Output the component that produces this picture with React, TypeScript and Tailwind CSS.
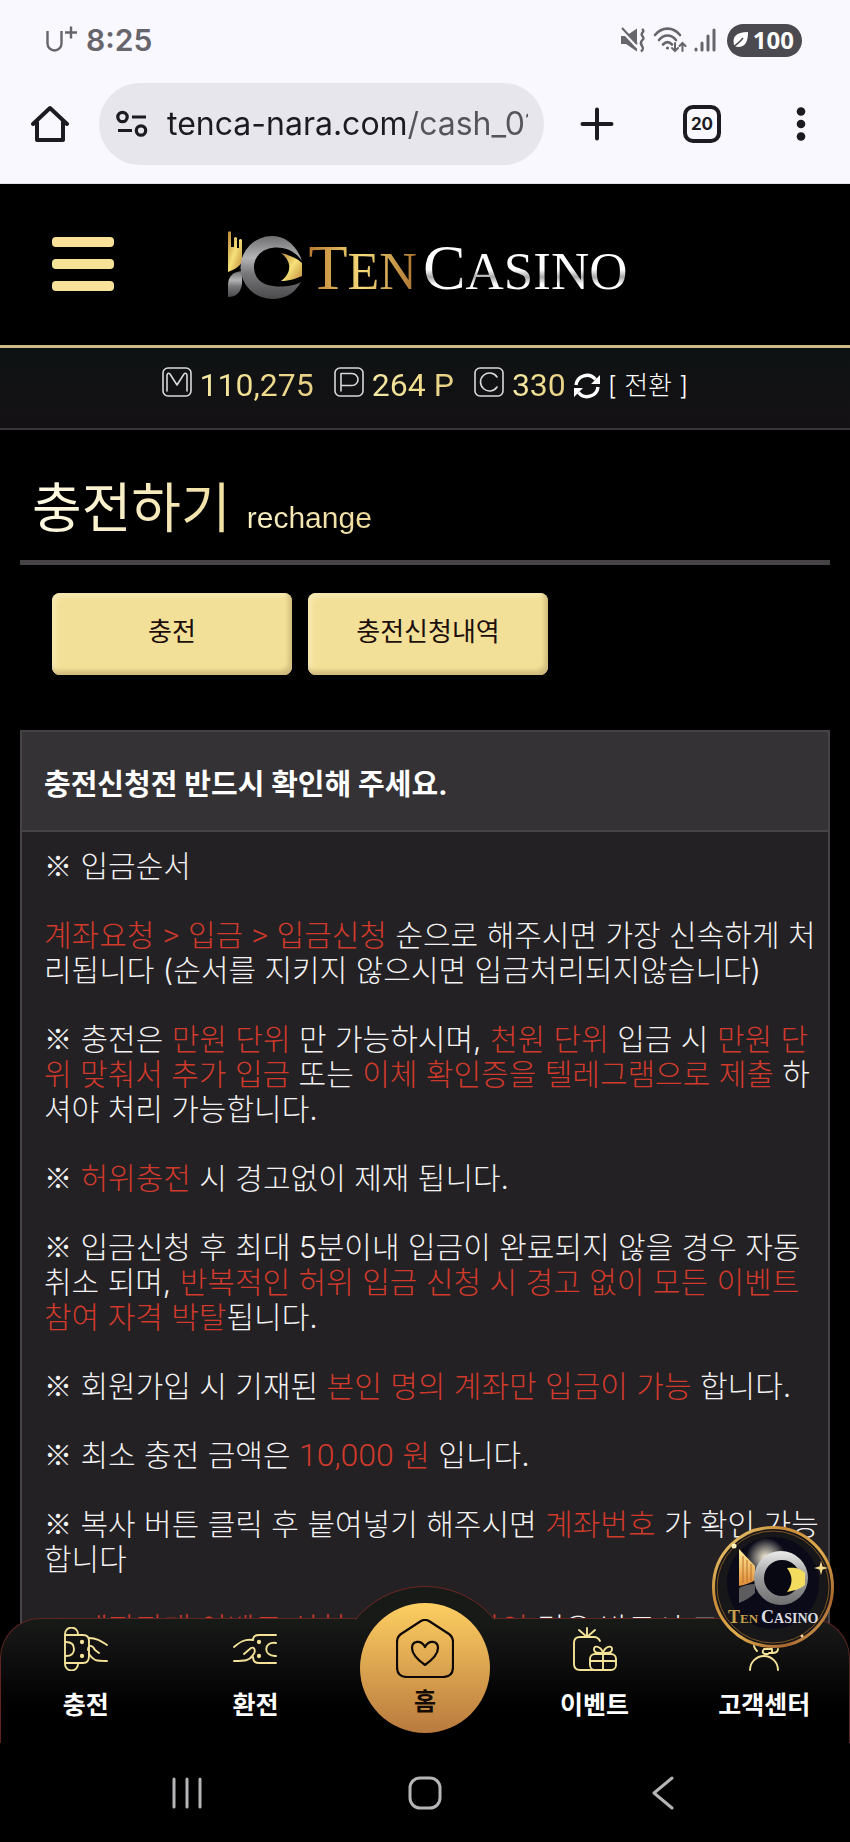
import React from "react";

const gold = "#f3e298";

function StatusBar() {
  return (
    <div className="flex h-20 items-center justify-between pr-12 pl-11 text-[#66656b]">
      <div className="flex items-center gap-2">
        <svg width="34" height="30" viewBox="0 0 34 30" fill="none" stroke="currentColor" strokeWidth="2.4" aria-hidden="true">
          <path d="M3.500 6V18.500a7 7 0 0 0 14 0V6" />
          <path d="M21 7.500H33M27 1.500V13.500" />
        </svg>
        <span className="font-[Inter,sans-serif] text-[30px] leading-8 font-semibold">8:25</span>
      </div>
      <div className="flex items-center gap-[7px]">
        <svg width="26" height="26" viewBox="0 0 26 26" fill="none" stroke="currentColor" aria-hidden="true">
          <path d="M1 9h5L17 1.500v23L6 17H1Z" fill="currentColor" stroke="none" />
          <path d="M1 2 18 20" stroke="#f9f8fe" strokeWidth="4" />
          <path d="M2 1 17 17" strokeWidth="2" />
          <path d="M22 2c4 2.500-2 4 0 6.500s2 3 0 5-1 4 0 5.500 2 3-1 5.500" strokeWidth="2.400" />
        </svg>
        <svg width="34" height="28" viewBox="0 0 34 28" fill="none" stroke="currentColor" strokeWidth="2.600" strokeLinecap="round" aria-hidden="true">
          <path d="M2 9c7-8.500 18-8.500 25 0M6 14c5-6 12-6 17 0M10 18.500c3-3.200 6-3.200 9 0" />
          <circle cx="14.500" cy="22" r="1.600" fill="currentColor" stroke="none" />
          <path d="M22 17v8m-3-3 3 3 3-3M29.500 25v-8m-3 3 3-3 3 3" strokeWidth="2" />
        </svg>
        <svg width="22" height="26" viewBox="0 0 22 26" fill="none" stroke="currentColor" strokeWidth="3" strokeLinecap="round" aria-hidden="true">
          <path d="M2 22v1M8 16v7M14 9v14M20 3v20" />
        </svg>
        <span className="ml-1 flex h-[33px] items-center gap-1 rounded-full bg-[#4b4a50] pr-2 pl-1 text-white">
          <svg width="18" height="18" viewBox="0 0 18 18" aria-hidden="true">
            <path d="M3 14C1 6 5 1 17 1c0 10-3 15-10 15-2 0-3-1-4-2Z" fill="#fff" />
            <path d="M1 17C5 14 9 11 12 7" stroke="#4b4a50" strokeWidth="1.500" fill="none" />
          </svg>
          <span className="font-['Open_Sans',sans-serif] text-[24px] leading-8 font-bold">100</span>
        </span>
      </div>
    </div>
  );
}

function BrowserBar() {
  return (
    <div className="flex h-[104px] items-start border-b border-[#e2e1e8] pt-[3px] pr-10 pl-[31px] text-[#1c1b22]">
      <div className="flex h-[82px] w-full items-center">
        <button aria-label="Home" className="shrink-0">
          <svg width="38" height="38" viewBox="0 0 38 38" fill="none" stroke="currentColor" strokeWidth="4" strokeLinejoin="round" strokeLinecap="round">
            <path d="M2 19 19 3l17 16M6 17v18h26V17" />
          </svg>
        </button>
        <label className="ml-[30px] flex h-full min-w-0 flex-1 items-center rounded-full bg-[#e7e6ed] pr-4 pl-4">
          <svg width="34" height="28" viewBox="0 0 34 28" className="shrink-0" fill="none" stroke="currentColor" strokeWidth="3.200" aria-hidden="true">
            <circle cx="7.500" cy="7" r="4.700" />
            <path d="M17 7h14M3 20.500h14" />
            <circle cx="26" cy="20.500" r="4.700" />
          </svg>
          <input
            aria-label="Address"
            readOnly
            defaultValue="tenca-nara.com/cash_01"
            className="ml-[18px] min-w-0 flex-1 bg-linear-to-r from-[#1c1b22] from-[238px] to-[#55545b] to-[238px] bg-clip-text font-[Inter,sans-serif] text-[32px] leading-10 text-transparent outline-none"
          />
        </label>
        <button aria-label="New tab" className="ml-9 shrink-0">
          <svg width="34" height="34" viewBox="0 0 34 34" fill="none" stroke="currentColor" strokeWidth="4" strokeLinecap="round">
            <path d="M17 2.500v29M2.500 17h29" />
          </svg>
        </button>
        <button aria-label="Tabs" className="ml-[69px] flex size-[38px] shrink-0 items-center justify-center rounded-[10px] border-4 border-[#1c1b22] font-[Inter,sans-serif] text-[17px] leading-5 font-bold">
          20
        </button>
        <button aria-label="More" className="ml-[71px] shrink-0">
          <svg width="18" height="36" viewBox="0 0 18 36" fill="currentColor">
            <circle cx="9" cy="5.500" r="4.300" />
            <circle cx="9" cy="18" r="4.300" />
            <circle cx="9" cy="30.500" r="4.300" />
          </svg>
        </button>
      </div>
    </div>
  );
}

function Emblem() {
  return (
    <svg width="76" height="70" viewBox="0 0 76 70" aria-hidden="true">
      <defs>
        <linearGradient id="silver" x1="0" y1="0" x2="0" y2="1">
          <stop offset="0" stopColor="#6f6f72" />
          <stop offset=".35" stopColor="#b4b4b6" />
          <stop offset=".6" stopColor="#77777a" />
          <stop offset="1" stopColor="#4a4a4d" />
        </linearGradient>
        <linearGradient id="leaf" x1="0" y1="0" x2="1" y2="1">
          <stop offset="0" stopColor="#b98435" />
          <stop offset=".5" stopColor="#f6e27a" />
          <stop offset="1" stopColor="#c08a3a" />
        </linearGradient>
      </defs>
      <path d="M0 1q1.500-1.500 3 0v15h3V7q1.500-2 3 0v10h2V9q1.500-2 3 0v22q-3 6-14 10Z" fill="url(#leaf)" />
      <path d="M0 66V53q1-12 14-13v13q-2 13-14 13Z" fill="url(#silver)" />
      <path d="M74 30C68 13 57 5 44 5a31 31 0 0 0 0 63c13 0 22-5 29-17-9 5-21 5-28 4-12-1-19-9-19-19s8-18 18-19c10-2 23 2 30 13Z" fill="url(#silver)" />
      <path d="M53 22c8 2 16 5 21 10v13c-6 3-15 5-21 5 10-7 12-19 0-28Z" fill="url(#leaf)" />
    </svg>
  );
}

function SiteHeader() {
  return (
    <header className="grid h-[161px] grid-cols-[1fr_auto_1fr] items-center px-13 pb-[2px]">
      <button aria-label="메뉴" className="flex w-[62px] flex-col gap-3">
        <span className="h-[10px] w-full rounded-sm bg-[#fae19a]" />
        <span className="h-[10px] w-full rounded-sm bg-[#f5e297]" />
        <span className="h-[10px] w-full rounded-sm bg-[#f8e29b]" />
      </button>
      <a href="#home" className="mt-1 flex items-center gap-1 pl-[6px] font-['Liberation_Serif',serif] text-[64px] leading-[72px]">
        <Emblem />
        <span className="flex items-baseline gap-[6px] pt-2">
          <span className="bg-linear-to-r from-[#b9792f] via-[#f7dc7a] to-[#a8702c] bg-clip-text text-transparent">
            T<span className="text-[52px]">EN</span>
          </span>
          <span className="bg-linear-to-b from-white from-50% via-[#a9a9ab] via-60% to-white to-70% bg-clip-text text-transparent">
            C<span className="text-[53px]">ASINO</span>
          </span>
        </span>
      </a>
    </header>
  );
}

function Badge({ d }: { d: string }) {
  return (
    <svg width="30" height="30" viewBox="0 0 30 30" fill="none" stroke="#d9d9dc" strokeWidth="1.600" strokeLinecap="round" strokeLinejoin="round" aria-hidden="true">
      <rect x="1" y="1" width="28" height="28" rx="5" />
      <path d={d} />
    </svg>
  );
}

function Balance({ icon, value }: { icon: string; value: string }) {
  return (
    <span className="flex items-center gap-2">
      <Badge d={icon} />
      <span className="mt-[6px] bg-linear-to-r from-[#f6e9a6] via-[#f1df8f] to-[#e6cf86] bg-clip-text font-[Roboto,sans-serif] text-[32px] leading-10 text-transparent">
        {value}
      </span>
    </span>
  );
}

function BalanceBar() {
  return (
    <div className="flex h-[85px] items-center justify-center gap-5 border-t-3 border-b-2 border-t-[#cdbb87] border-b-[#39373a] bg-linear-to-b from-[#0e1213] to-[#141114] pb-3">
      <Balance icon="M5 24V8q1-3 3-1l7 11 7-11q2-2 3 1V24" value="110,275" />
      <Balance icon="M7 24V6.500H18a6 6 0 0 1 0 12H7" value="264 P" />
      <div className="flex items-center gap-2">
        <Balance icon="M23 10a9 9 0 1 0 0 10" value="330" />
        <button className="mt-2 flex items-center gap-2 text-[26px] leading-8 font-light text-white">
          <svg width="26" height="26" viewBox="0 0 26 26" fill="none" stroke="#fff" strokeWidth="3.400" aria-hidden="true">
            <path d="M2 12A11 11 0 0 1 21.500 6.500M24 14A11 11 0 0 1 4.500 19.500" />
            <path d="M26 2v9h-9ZM0 24v-9h9Z" fill="#fff" stroke="none" />
          </svg>
          <span>[ 전환 ]</span>
        </button>
      </div>
    </div>
  );
}

function Red({ children }: { children: React.ReactNode }) {
  return <span className="text-[#d03a2c]">{children}</span>;
}

function Mark() {
  return <span className="font-['Noto_Sans_CJK_KR',sans-serif] text-[28px] leading-none">※</span>;
}

function Arrow() {
  return <span className="font-[Roboto,sans-serif] text-[32px] leading-none">&gt;</span>;
}

function Notice() {
  return (
    <section className="mx-5 border-2 border-[#454346] bg-[#232123] text-[#f3f2f3]">
      <h2 className="border-b-2 border-[#454346] bg-[#353235] px-[22px] pt-8 pb-6 text-[29px] leading-[42px] font-bold text-white">
        충전신청전 반드시 확인해 주세요.
      </h2>
      <div className="flex flex-col gap-[34px] pt-[17px] pr-1 pl-[22px] text-[30px] leading-[35px] font-light">
        <p>
          <Mark /> 입금순서
        </p>
        <p>
          <Red>
            계좌요청 <Arrow /> 입금 <Arrow /> 입금신청
          </Red>{" "}
          순으로 해주시면 가장 신속하게 처리됩니다 (순서를 지키지 않으시면 입금처리되지않습니다)
        </p>
        <p>
          <Mark /> 충전은 <Red>만원 단위</Red> 만 가능하시며, <Red>천원 단위</Red> 입금 시 <Red>만원 단위 맞춰서 추가 입금</Red> 또는{" "}
          <Red>이체 확인증을 텔레그램으로 제출</Red> 하셔야 처리 가능합니다.
        </p>
        <p>
          <Mark /> <Red>허위충전</Red> 시 경고없이 제재 됩니다.
        </p>
        <p>
          <Mark /> 입금신청 후 최대 5분이내 입금이 완료되지 않을 경우 자동취소 되며, <Red>반복적인 허위 입금 신청 시 경고 없이 모든 이벤트 참여 자격 박탈</Red>됩니다.
        </p>
        <p>
          <Mark /> 회원가입 시 기재된 <Red>본인 명의 계좌만 입금이 가능</Red> 합니다.
        </p>
        <p>
          <Mark /> 최소 충전 금액은{" "}
          <Red>
            <span className="font-[Roboto,sans-serif] text-[32px] leading-none">10,000</span> 원
          </Red>{" "}
          입니다.
        </p>
        <p>
          <Mark /> 복사 버튼 클릭 후 붙여넣기 해주시면 <Red>계좌번호</Red> 가 확인 가능합니다
        </p>
        <p>
          <Red>
            <Mark /> 계좌판매 이벤트 신청 하신회원 확인
          </Red>{" "}
          경우 반드시 고객센터
        </p>
      </div>
    </section>
  );
}

function Recharge() {
  const tab =
    "h-[82px] w-60 rounded-lg bg-[#f3e098] pb-1 text-[26px] leading-8 text-[#1c0f0c] shadow-[inset_-3px_-4px_5px_#cdb87a,inset_3px_3px_5px_#f9ebb9]";
  return (
    <main className="min-h-0 flex-1 overflow-hidden">
      <div className="mx-5 flex items-baseline gap-4 border-b-5 border-[#454346] px-3 pt-[43px] pb-[15px]">
        <h1 className="bg-linear-to-r from-[#fffbe6] to-[#f0dfa0] bg-clip-text text-[54px] leading-[72px] text-transparent">충전하기</h1>
        <span className="bg-linear-to-r from-[#f9efc4] to-[#eedb9a] bg-clip-text font-['Liberation_Sans',sans-serif] text-[30px] leading-10 text-transparent">rechange</span>
      </div>
      <div className="flex gap-4 px-13 pt-7 pb-[55px]">
        <button className={tab}>충전</button>
        <button className={tab}>충전신청내역</button>
      </div>
      <Notice />
    </main>
  );
}

const DepositIcon = () => (
  <>
    <path d="M1 37V7a6 6 0 0 1 13 0v1M1 37a6 6 0 0 0 13 0v-1M2 8h17q6 0 6 6v15q0 7-6 7H2M2 15q8 0 8 7t-8 7" />
    <path d="M25 11c8 0 12 3 18 7M24 23c0-5 4-6 7 0l4 3M25 27c5 7 7 7 18 7" />
    <circle cx="18" cy="15" r="1.200" fill={gold} />
    <circle cx="18" cy="29" r="1.200" fill={gold} />
  </>
);
const WithdrawIcon = () => (
  <>
    <path d="M43 8H26q-6 0-6 5M20 30q0 6 6 6h17M43 16c-13-2-13 14 0 13" />
    <path d="M1 20c6-5 10-8 19-7M11 27l7-6c4-2 5 4 2 7-4 6-8 6-19 6" />
    <circle cx="26" cy="15" r="1.200" fill={gold} />
    <circle cx="26" cy="29" r="1.200" fill={gold} />
  </>
);
const EventIcon = () => (
  <>
    <path d="M27 14q-2-4-6-4H7q-6 0-6 6v21q0 6 6 6h14M14 1v8M6 3l8 7 8-7" />
    <rect x="17" y="27" width="26" height="16" rx="5" />
    <path d="M17 34h26M30 27v16M30 26c-2-7-9-8-9-4s3 4 9 4Zm0 0c2-7 9-8 9-4s-3 4-9 4Z" />
  </>
);
const SupportIcon = () => (
  <>
    <path d="M8 43a14 14 0 0 1 28 0M12 19a10 10 0 0 0 3 5" />
    <path d="M26 22h-4q-3 4 1 5h3M27 22h3v4h-3M30 26q6 0 6-4" />
  </>
);

function Tab({ label, icon }: { label: string; icon: React.ReactNode }) {
  return (
    <a href="#tab" className="flex flex-1 flex-col items-center gap-4 pt-2 text-[25px] leading-9 font-bold text-white">
      <svg width="44" height="44" viewBox="0 0 44 44" fill="none" stroke={gold} strokeWidth="1.900" strokeLinecap="round" strokeLinejoin="round" aria-hidden="true">
        {icon}
      </svg>
      {label}
    </a>
  );
}

function FloatingLogo() {
  return (
    <a href="#casino" aria-label="Ten Casino" className="absolute -top-[92px] right-4 z-20">
      <svg width="122" height="122" viewBox="0 0 122 122">
        <defs>
          <linearGradient id="ring" x1="0" y1="0" x2="1" y2="1">
            <stop offset="0" stopColor="#f4dd80" />
            <stop offset=".3" stopColor="#c98b38" />
            <stop offset=".55" stopColor="#e0ad4e" />
            <stop offset=".8" stopColor="#a9672f" />
            <stop offset="1" stopColor="#f0cf75" />
          </linearGradient>
          <radialGradient id="glow">
            <stop offset="0" stopColor="#fff8df" />
            <stop offset="1" stopColor="#fff8df" stopOpacity="0" />
          </radialGradient>
          <linearGradient id="steel" x1="0" y1="0" x2="0" y2="1">
            <stop offset="0" stopColor="#ececec" />
            <stop offset=".5" stopColor="#9b9b9c" />
            <stop offset="1" stopColor="#6f6f71" />
          </linearGradient>
          <linearGradient id="flame" x1="0" y1="0" x2="0" y2="1">
            <stop offset="0" stopColor="#ffef9a" />
            <stop offset="1" stopColor="#e08a35" />
          </linearGradient>
        </defs>
        <circle cx="61" cy="61" r="59.500" fill="#171719" stroke="url(#ring)" strokeWidth="3" />
        <circle cx="61" cy="61" r="56" fill="none" stroke="#7d5425" strokeWidth="1" />
        <circle cx="61" cy="57" r="46" fill="#0a0a18" />
        <circle cx="54" cy="32" r="20" fill="url(#glow)" />
        <path d="M27 23 43 40v14q-6 4-16 6Z" fill="url(#flame)" />
        <path d="M31 30v27M35 34v22M39 38v17" stroke="#b9702a" strokeWidth="1" />
        <path d="M27 77V62q8-4 16-4v9q-6 6-16 10Z" fill="#5c5c5f" />
        <circle cx="69" cy="52" r="27" fill="url(#steel)" />
        <circle cx="70" cy="52" r="18" fill="#080812" />
        <path d="M75 42c7-1 14 0 18 5v12c-5 4-12 6-18 7 6-8 6-16 0-24Z" fill="#f3dc5e" />
        <path d="m109 35 1.500 5.500 5.500 1.500-5.500 1.500-1.500 5.500-1.500-5.500-5.500-1.500 5.500-1.500Z" fill="#f8dc8c" />
        <circle cx="22" cy="20" r="2.500" fill="#fff3c0" />
        <circle cx="90" cy="110" r="1.500" fill="#fbd9a0" />
        <text x="16" y="97" fontFamily="Liberation Serif, serif" fontWeight="700" fill="#c9a04c" fontSize="18">
          T<tspan fontSize="13">EN</tspan>
          <tspan fill="#dcdce2" dx="3" fontSize="18">C</tspan>
          <tspan fill="#dcdce2" fontSize="14">ASINO</tspan>
        </text>
      </svg>
    </a>
  );
}

function BottomNav() {
  return (
    <div className="relative z-10 -mt-10">
      <nav className="flex h-[125px] rounded-t-[40px] border border-b-0 border-[#5e2622] bg-linear-to-b from-[#181a18] via-[#0a0a0a] via-45% to-black">
        <Tab label="충전" icon={<DepositIcon />} />
        <Tab label="환전" icon={<WithdrawIcon />} />
        <div className="relative flex-1">
          <span className="absolute -top-[33px] left-1/2 h-[34px] w-[140px] -translate-x-1/2 overflow-hidden">
            <span className="absolute top-0 -left-5 size-[180px] rounded-full border border-[#6e2723] bg-[#181a18]" />
          </span>
          <a
            href="#home"
            className="absolute -top-4 left-1/2 flex size-[130px] -translate-x-1/2 flex-col items-center gap-2 rounded-full bg-linear-to-b from-[#fdcf62] to-[#b97a3e] pt-4 text-[24px] leading-8 font-bold text-[#150c05]"
          >
            <svg width="58" height="59" viewBox="0 0 58 59" fill="none" stroke="#0d0805" strokeWidth="2.200" strokeLinejoin="round" aria-hidden="true">
              <path d="M25 2q4-2 8 0l20 13q4 3 4 8v25q0 10-10 10H11Q1 58 1 48V23q0-5 4-8Z" />
              <path d="M29 46C22 41 16 35 16 29c0-7 9-9 13-1 4-8 13-6 13 1 0 6-6 12-13 17Z" />
            </svg>
            홈
          </a>
        </div>
        <Tab label="이벤트" icon={<EventIcon />} />
        <Tab label="고객센터" icon={<SupportIcon />} />
      </nav>
      <FloatingLogo />
    </div>
  );
}

function SystemNav() {
  return (
    <div className="grid h-[99px] grid-cols-3 items-center justify-items-center bg-black px-17 text-[#b5b4b7]">
      <button aria-label="Recents">
        <svg width="32" height="34" viewBox="0 0 32 34" stroke="currentColor" strokeWidth="3" strokeLinecap="round">
          <path d="M3 3v28M16 3v28M29 3v28" />
        </svg>
      </button>
      <button aria-label="Home screen">
        <svg width="34" height="34" viewBox="0 0 34 34" fill="none" stroke="currentColor" strokeWidth="3">
          <rect x="2" y="2" width="30" height="30" rx="10" />
        </svg>
      </button>
      <button aria-label="Back">
        <svg width="22" height="34" viewBox="0 0 22 34" fill="none" stroke="currentColor" strokeWidth="3" strokeLinecap="round" strokeLinejoin="round">
          <path d="M20 2 2 17l18 15" />
        </svg>
      </button>
    </div>
  );
}

export default function App() {
  return (
    <div className="flex h-screen flex-col overflow-hidden bg-black font-[Inter,'Noto_Sans_CJK_KR',sans-serif]">
      <div className="bg-[#f9f8fe]">
        <StatusBar />
        <BrowserBar />
      </div>
      <SiteHeader />
      <BalanceBar />
      <Recharge />
      <BottomNav />
      <SystemNav />
    </div>
  );
}
